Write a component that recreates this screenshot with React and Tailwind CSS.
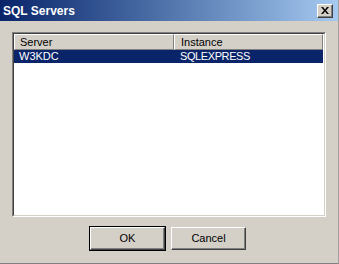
import React from 'react';

const rows = [{ server: 'W3KDC', instance: 'SQLEXPRESS' }];

const Btn = ({ label, isDefault }) => (
  <button
    className={`w-[75px] h-[23px] bg-[#d4d0c8] text-[11px] text-black ${isDefault ? 'outline outline-1 outline-black' : ''} border border-t-white border-l-white border-r-[#404040] border-b-[#404040] shadow-[inset_-1px_-1px_0_#808080]`}
  >
    {label}
  </button>
);

export default function App() {
  return (
    <div className="w-[339px] h-[264px] bg-[#d4d0c8] flex flex-col border-r border-b border-r-[#a0a0a0] border-b-[#808080]" style={{ fontFamily: '"Liberation Sans", Arial, sans-serif' }}>
      <div className="h-[21px] flex items-center justify-between pl-[3px] pr-[5px] bg-gradient-to-r from-[#0a246a] to-[#a6caf0]">
        <span className="text-white font-bold text-[12px]">SQL Servers</span>
        <div className="w-[16px] h-[14px] bg-[#d4d0c8] flex items-center justify-center border border-t-white border-l-white border-r-[#404040] border-b-[#404040] shadow-[inset_-1px_-1px_0_#808080]">
          <svg width="8" height="7" viewBox="0 0 8 7">
            <path d="M0 0h2l2 2.5L6 0h2L5 3.5 8 7H6L4 4.5 2 7H0l3-3.5z" fill="black" />
          </svg>
        </div>
      </div>

      <div className="flex-1 flex flex-col px-[12px] pt-[11px]">
        <div className="h-[185px] bg-white border border-t-[#808080] border-l-[#808080] border-r-white border-b-white">
          <div className="h-full border border-t-[#404040] border-l-[#404040] border-r-[#d4d0c8] border-b-[#d4d0c8] flex flex-col">
            <div className="flex h-[16px] text-[11px] text-black">
              <div className="w-[160px] bg-[#d4d0c8] pl-[5px] flex items-center border border-t-white border-l-white border-r-[#808080] border-b-[#808080]">Server</div>
              <div className="flex-1 bg-[#d4d0c8] pl-[6px] flex items-center border border-t-white border-l-white border-r-[#808080] border-b-[#808080]">Instance</div>
              <div className="w-[1px]"></div>
            </div>
            {rows.map((r, i) => (
              <div key={i} className="flex h-[13px] text-[11px] text-white bg-[#0a246a] mr-[1px] items-center">
                <div className="w-[160px] pl-[5px]">{r.server}</div>
                <div className="flex-1 pl-[6px] tracking-[-0.4px]">{r.instance}</div>
              </div>
            ))}
          </div>
        </div>

        <div className="flex gap-[6px] mt-[10px] pl-[78px]">
          <Btn label="OK" isDefault />
          <Btn label="Cancel" />
        </div>
      </div>
    </div>
  );
}
